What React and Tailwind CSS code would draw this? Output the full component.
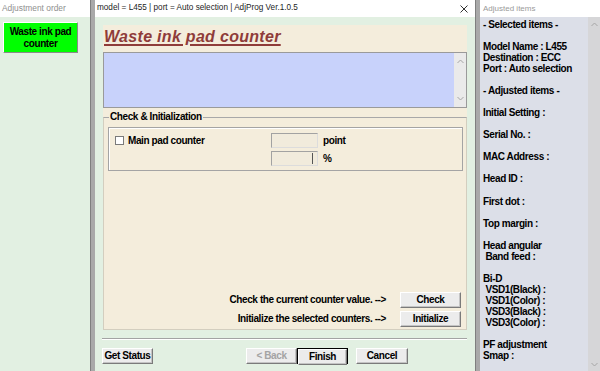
import React from "react";

const font = "text-[10px] font-bold tracking-[-0.4px] leading-none";
const bold = font + " text-black";
const btnBase =
  "h-[16px] flex items-center justify-center bg-[#ececec] border border-t-white border-l-white border-r-[#7a7a7a] border-b-[#7a7a7a] shadow-[inset_-1px_-1px_0_#c4c4c4] " +
  font;
const btn = btnBase + " text-black";

const adjusted = [
  "- Selected items -",
  "",
  "Model Name : L455",
  "Destination : ECC",
  "Port : Auto selection",
  "",
  "- Adjusted items -",
  "",
  "Initial Setting :",
  "",
  "Serial No. :",
  "",
  "MAC Address :",
  "",
  "Head ID :",
  "",
  "First dot :",
  "",
  "Top margin :",
  "",
  "Head angular",
  " Band feed :",
  "",
  "Bi-D",
  " VSD1(Black) :",
  " VSD1(Color) :",
  " VSD3(Black) :",
  " VSD3(Color) :",
  "",
  "PF adjustment",
  "Smap :",
];

const Chevron = ({ down }) => (
  <svg width="7" height="5" viewBox="0 0 7 5">
    <path
      d={down ? "M0.5 1 L3.5 4 L6.5 1" : "M0.5 4 L3.5 1 L6.5 4"}
      fill="none"
      stroke="#a6a6a6"
      strokeWidth="1"
    />
  </svg>
);

const Divider = () => (
  <div className="w-[5px] shrink-0 bg-[#a9a9a9] border-l border-[#7f7f7f]" />
);

function LeftPanel() {
  return (
    <div className="w-[90px] shrink-0 flex flex-col">
      <div className="h-[17px] bg-white flex items-center pl-[2px] text-[8.4px] text-[#8f8f8f]">
        Adjustment order
      </div>
      <div className="flex-1 bg-[#e2f0e2] pt-[5px] pl-[3px]">
        <div className="w-[75px] h-[31px] bg-[#00ff00] border border-t-white border-l-white border-r-[#8a8a8a] border-b-[#8a8a8a] flex flex-col items-center justify-center text-[10px] font-bold tracking-[-0.4px] leading-[11.5px] text-black">
          <span>Waste ink pad</span>
          <span>counter</span>
        </div>
      </div>
    </div>
  );
}

function MainWindow() {
  return (
    <div className="w-[380px] shrink-0 flex flex-col">
      <div className="h-[17px] bg-white flex items-center justify-between pl-[2px] pr-[7px] text-[8.2px] text-[#1c1c1c]">
        <span>model = L455 | port = Auto selection | AdjProg Ver.1.0.5</span>
        <svg width="8" height="8" viewBox="0 0 8 8">
          <path d="M0.5 0.5 L7.5 7.5 M7.5 0.5 L0.5 7.5" stroke="#333" strokeWidth="1" />
        </svg>
      </div>
      <div className="flex-1 bg-[#e2f0e2] pt-[8px] pl-[8px] pr-[8px] flex flex-col">
        <div className="h-[305px] bg-[#f4eddc] flex flex-col">
          <div className="h-[27px] shrink-0 pl-[1px]">
            <span className="text-[16px] leading-[18px] font-bold italic tracking-[0.3px] text-[#8f3c3a] underline decoration-[1.5px] underline-offset-[2px]">
              Waste ink pad counter
            </span>
          </div>
          <div className="h-[56px] shrink-0 flex border border-[#9a9a9a]">
            <div className="flex-1 bg-[#c8d2fb]" />
            <div className="w-[12px] bg-[#eaeaea] flex flex-col items-center justify-between py-[6px]">
              <Chevron />
              <Chevron down />
            </div>
          </div>
          <fieldset className="mt-[4px] h-[218px] border border-[#d3cebf] border-t-[#a8a8a8] pl-[4px] pr-[3px] pb-[1px] min-w-0">
            <legend className="ml-[1px] px-[1px] text-[10px] font-bold tracking-[-0.4px] leading-[10px] text-black">
              Check &amp; Initialization
            </legend>
            <div className="h-[206px] flex flex-col">
              <div className="mt-[5px] h-[44px] border border-[#a4a4a4] shadow-[inset_1px_1px_0_#fff] flex flex-col pt-[5px] gap-[3px]">
                <div className="h-[15px] flex items-center">
                  <div className="w-[162px] pl-[6px] flex items-center gap-[4px]">
                    <div className="w-[9px] h-[9px] bg-white border border-[#7a7a7a]" />
                    <span className={bold}>Main pad counter</span>
                  </div>
                  <div className="w-[47px] h-[15px] border border-[#a2a2a2] border-b-[#dcdcdc] border-r-[#dcdcdc] bg-[#f1ebdc]" />
                  <span className={"ml-[5px] " + bold}>point</span>
                </div>
                <div className="h-[15px] flex items-center">
                  <div className="w-[162px]" />
                  <div className="w-[47px] h-[15px] border border-[#a2a2a2] border-b-[#dcdcdc] border-r-[#dcdcdc] bg-[#f1ebdc] flex justify-end pr-[4px] py-[1px]">
                    <div className="w-[1px] h-full bg-[#555]" />
                  </div>
                  <span className={"ml-[5px] " + bold}>%</span>
                </div>
              </div>
              <div className="mt-auto flex flex-col gap-[3px] mr-[2px] mb-[1px]">
                <div className="flex items-center justify-end gap-[14px]">
                  <span className={bold}>Check the current counter value. --&gt;</span>
                  <div className={"w-[61px] " + btn}>Check</div>
                </div>
                <div className="flex items-center justify-end gap-[14px]">
                  <span className={bold}>Initialize the selected counters. --&gt;</span>
                  <div className={"w-[61px] " + btn}>Initialize</div>
                </div>
              </div>
            </div>
          </fieldset>
        </div>
        <div className="mt-[8px] h-[2px] border-t border-[#a3a3a3] border-b border-b-white -ml-[1px]" />
        <div className="mt-[8px] flex items-center -ml-[1px]">
          <div className={"w-[51px] " + btn}>Get Status</div>
          <div className={"ml-[93px] w-[51px] " + btnBase + " text-[#a3a3a3]"}>&lt; Back</div>
          <div className="w-[51px] h-[16px] border border-black">
            <div className={"h-[14px] " + btnBase + " text-black"}>Finish</div>
          </div>
          <div className={"ml-[8px] w-[52px] " + btn}>Cancel</div>
        </div>
      </div>
    </div>
  );
}

function RightPanel() {
  return (
    <div className="flex-1 flex flex-col min-w-0">
      <div className="h-[17px] bg-white flex items-center pl-[3px] text-[8px] text-[#9a9a9a]">
        Adjusted items
      </div>
      <div className="flex-1 flex bg-[#dcdfe8]">
        <div className="flex-1 pt-[1.5px] pl-[3px]">
          {adjusted.map((line, i) => (
            <div
              key={i}
              className="h-[11.07px] text-[10px] font-bold tracking-[-0.4px] leading-[11.07px] text-black whitespace-pre"
            >
              {line}
            </div>
          ))}
        </div>
        <div className="w-[12px] bg-[#d6d6d8] flex flex-col items-center justify-between pt-[5px] pb-[4px]">
          <Chevron />
          <Chevron down />
        </div>
      </div>
    </div>
  );
}

export default function App() {
  return (
    <div className="w-[600px] h-[371px] flex overflow-hidden bg-[#e2f0e2] font-['Liberation_Sans',sans-serif]">
      <LeftPanel />
      <Divider />
      <MainWindow />
      <Divider />
      <RightPanel />
    </div>
  );
}
